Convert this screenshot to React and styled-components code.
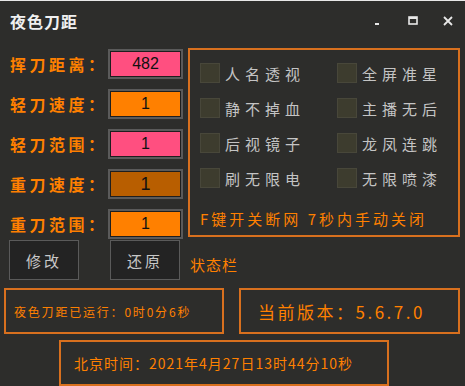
import React from "react";
import styled, { createGlobalStyle } from "styled-components";

const Global = createGlobalStyle`
  body {
    margin: 0;
    background: #2d2d2b;
    font-family: "Noto Sans CJK SC", "Noto Sans", sans-serif;
  }
`;

const Window = styled.div`
  width: 465px;
  height: 386px;
  background: #2d2d2b;
  border-top: 1px solid #e8e8e8;
  box-sizing: border-box;
  overflow: hidden;
`;

const TitleBar = styled.div`
  height: 39px;
  display: flex;
  align-items: center;
  padding-left: 10px;
`;

const Title = styled.div`
  flex: 1;
  color: #f0f0f0;
  font-size: 16px;
  font-weight: 700;
  letter-spacing: 1px;
`;

const TitleButton = styled.div`
  width: 35px;
  height: 39px;
  display: flex;
  align-items: center;
  justify-content: center;
  color: #e8e8e8;
`;

const Main = styled.div`
  display: flex;
  padding-top: 8px;
`;

const Fields = styled.div`
  width: 188px;
  display: flex;
  flex-direction: column;
  gap: 10px;
  padding-top: 1px;
`;

const FieldRow = styled.div`
  display: flex;
  align-items: center;
  height: 30px;
`;

const Label = styled.div`
  width: 98px;
  padding-left: 10px;
  color: #ff8000;
  font-size: 16px;
  font-weight: 700;
  letter-spacing: 3.5px;
  white-space: nowrap;
`;

const Input = styled.div`
  width: 71px;
  height: 26px;
  border: 2px solid #5a5a5a;
  box-shadow: inset 0 0 0 1px #1e1e1e;
  background: ${(p) => p.$bg};
  display: flex;
  align-items: center;
  justify-content: center;
  color: #111;
  font-family: "Liberation Sans", Arial, sans-serif;
  font-size: ${(p) => (p.$big ? "18px" : "16px")};
  box-sizing: content-box;
`;

const Panel = styled.div`
  width: 272px;
  height: 189px;
  border: 2px solid #d8701e;
  display: flex;
  flex-direction: column;
  padding: 13px 0 0 10px;
  box-sizing: border-box;
`;

const OptionGrid = styled.div`
  display: grid;
  grid-template-columns: 137px 120px;
  row-gap: 15px;
`;

const Option = styled.div`
  display: flex;
  align-items: center;
  gap: 5px;
  height: 20px;
`;

const Box = styled.div`
  width: 18px;
  height: 18px;
  background: #3d3c2e;
  border: 1px solid #48473a;
`;

const OptionText = styled.span`
  color: #c4c4c4;
  font-size: 15px;
  letter-spacing: 5px;
  white-space: nowrap;
`;

const Notice = styled.div`
  margin-top: 20px;
  color: #ff8000;
  font-size: 15px;
  letter-spacing: 3px;
  white-space: nowrap;
`;

const ButtonRow = styled.div`
  display: flex;
  align-items: center;
  padding: 1px 0 0 9px;
  height: 40px;
`;

const Button = styled.div`
  width: 68px;
  height: 38px;
  border: 1px solid #5a5a5a;
  background: #232323;
  color: #c8c8c8;
  font-size: 15px;
  letter-spacing: 3px;
  display: flex;
  align-items: center;
  justify-content: center;
  margin-right: ${(p) => p.$gap || 0}px;
`;

const Status = styled.div`
  color: #ff8000;
  font-size: 15px;
  letter-spacing: 1px;
  margin-top: 9px;
`;

const InfoRow = styled.div`
  display: flex;
  gap: 15px;
  padding: 8px 0 0 4px;
`;

const InfoBox = styled.div`
  width: ${(p) => p.$w}px;
  height: 46px;
  border: 2px solid #d8701e;
  box-sizing: border-box;
  display: flex;
  align-items: center;
  padding-left: ${(p) => p.$pad}px;
  color: #ff8000;
  font-size: ${(p) => p.$size}px;
  letter-spacing: ${(p) => p.$ls || 0}px;
  white-space: nowrap;
`;

const ClockRow = styled.div`
  padding: 6px 0 0 59px;
`;

const fields = [
  { label: "挥刀距离：", value: "482", bg: "#ff4f80" },
  { label: "轻刀速度：", value: "1", bg: "#ff8000" },
  { label: "轻刀范围：", value: "1", bg: "#ff4f80" },
  { label: "重刀速度：", value: "1", bg: "#b85e00", big: true },
  { label: "重刀范围：", value: "1", bg: "#ff8000" },
];

const options = [
  "人名透视",
  "全屏准星",
  "静不掉血",
  "主播无后",
  "后视镜子",
  "龙凤连跳",
  "刷无限电",
  "无限喷漆",
];

export default function App() {
  return (
    <Window>
      <Global />
      <TitleBar>
        <Title>夜色刀距</Title>
        <TitleButton>
          <svg width="10" height="10" viewBox="0 0 10 10">
            <rect x="2" y="7" width="4" height="2" fill="#e8e8e8" />
          </svg>
        </TitleButton>
        <TitleButton>
          <svg width="10" height="10" viewBox="0 0 10 10">
            <rect x="1" y="1" width="8" height="7" fill="none" stroke="#e8e8e8" strokeWidth="1.6" />
            <rect x="1" y="1" width="8" height="2" fill="#e8e8e8" />
          </svg>
        </TitleButton>
        <TitleButton>
          <svg width="12" height="12" viewBox="0 0 12 12">
            <path d="M2 2 L10 10 M10 2 L2 10" stroke="#e8e8e8" strokeWidth="1.8" />
          </svg>
        </TitleButton>
      </TitleBar>
      <Main>
        <Fields>
          {fields.map((f) => (
            <FieldRow key={f.label}>
              <Label>{f.label}</Label>
              <Input $bg={f.bg} $big={f.big}>
                {f.value}
              </Input>
            </FieldRow>
          ))}
        </Fields>
        <Panel>
          <OptionGrid>
            {options.map((o) => (
              <Option key={o}>
                <Box />
                <OptionText>{o}</OptionText>
              </Option>
            ))}
          </OptionGrid>
          <Notice>F键开关断网 7秒内手动关闭</Notice>
        </Panel>
      </Main>
      <ButtonRow>
        <Button $gap={31}>修改</Button>
        <Button $gap={10}>还原</Button>
        <Status>状态栏</Status>
      </ButtonRow>
      <InfoRow>
        <InfoBox $w={220} $pad={8} $size={12} $ls={1.8}>
          夜色刀距已运行：0时0分6秒
        </InfoBox>
        <InfoBox $w={221} $pad={17} $size={17} $ls={2.5}>
          当前版本：5.6.7.0
        </InfoBox>
      </InfoRow>
      <ClockRow>
        <InfoBox $w={330} $pad={13} $size={14} $ls={1}>
          北京时间：2021年4月27日13时44分10秒
        </InfoBox>
      </ClockRow>
    </Window>
  );
}
